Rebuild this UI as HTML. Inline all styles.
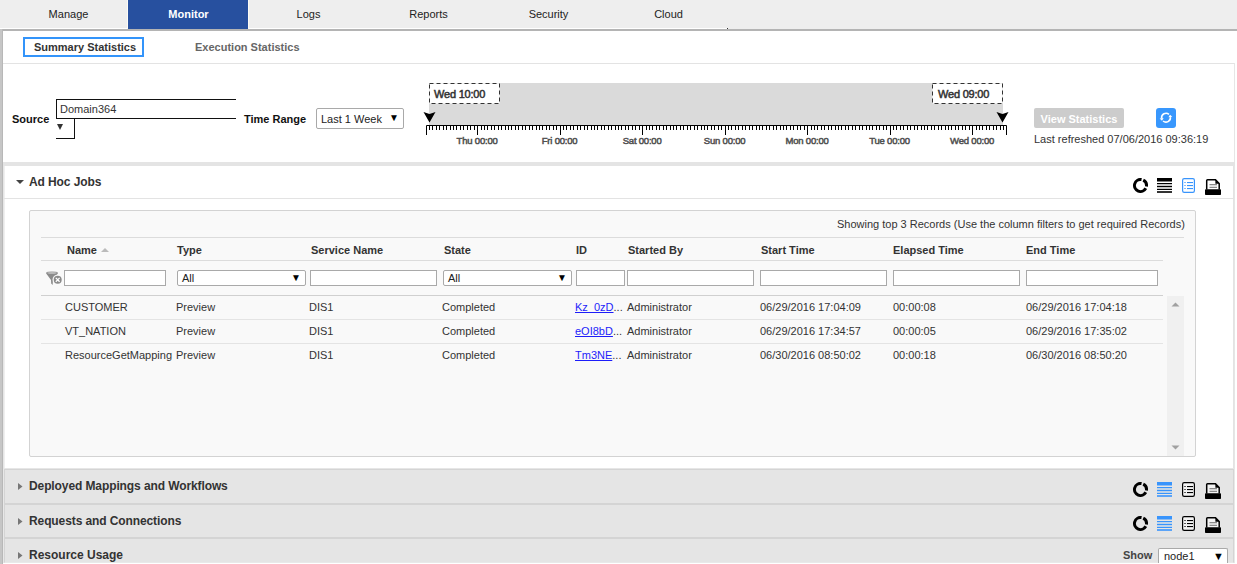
<!DOCTYPE html>
<html><head><meta charset="utf-8">
<style>
*{box-sizing:border-box}
html,body{margin:0;padding:0}
body{width:1237px;height:564px;overflow:hidden;position:relative;background:#fff;font-family:"Liberation Sans",sans-serif;font-size:11px;color:#333}
.a{position:absolute}
.nav{left:0;top:0;width:1237px;height:29px;background:#eeeeee}
.tab{position:absolute;top:0;height:28px;width:120px;text-align:center;line-height:28px;color:#222;font-size:11px;padding-left:1px}
.tab.on{background:#27509f;color:#fff;font-weight:bold}
.b{font-weight:bold}
.hdr{font-size:12px;font-weight:bold;color:#333;letter-spacing:-0.1px}
.inp{position:absolute;background:#fff;border:1px solid #a9a9a9;height:16px}
.sel{position:absolute;background:#fff;border:1px solid #a9a9a9;border-radius:2px;height:16px;font-size:11px;color:#222;line-height:14px;padding-left:4px}
.sel .ar{position:absolute;right:4px;top:0;font-size:10px;color:#000}
.th{position:absolute;top:244px;font-weight:bold;color:#333;font-size:11px}
.td{position:absolute;font-size:11px;color:#333}
.lnk{text-decoration:underline;color:#1d1dfa}
</style></head>
<body>
<svg width="0" height="0" style="position:absolute">
<defs>
<symbol id="donut" viewBox="0 0 15 15"><path d="M10.90 0.82A7.5 7.5 0 0 1 14.89 8.80L11.93 8.28A4.5 4.5 0 0 0 9.54 3.49ZM14.12 11.02A7.5 7.5 0 1 1 8.80 0.11L8.28 3.07A4.5 4.5 0 1 0 11.47 9.61Z" fill="#000"/></symbol>
<symbol id="lines" viewBox="0 0 15 15"><rect x="0" y="0" width="15" height="3.5"/><rect x="0" y="5" width="15" height="1"/><rect x="0" y="6" width="15" height="2" opacity=".22"/><rect x="0" y="8" width="15" height="1"/><rect x="0" y="9" width="15" height="2" opacity=".22"/><rect x="0" y="11" width="15" height="1"/><rect x="0" y="13" width="15" height="2" opacity=".8"/></symbol>
<symbol id="list" viewBox="0 0 13 15"><rect x="0.6" y="0.6" width="11.8" height="13.8" rx="1.6" style="fill:var(--ib,#f3f3f3)" stroke-width="1.2"/><g stroke="none"><rect x="2" y="4" width="2" height="1" opacity=".6"/><rect x="5" y="4" width="6" height="1.1"/><rect x="2" y="7" width="2" height="1" opacity=".6"/><rect x="5" y="7" width="6" height="1.1"/><rect x="2" y="10" width="2" height="1" opacity=".6"/><rect x="5" y="10" width="6" height="1.1"/></g></symbol>
<symbol id="prn" viewBox="0 0 16 16"><path d="M1.7 10.5V1.6Q1.7 0.8 2.5 0.8H10.5L14.2 4.5V10.5" style="fill:var(--ib,#f3f3f3)" stroke="#000" stroke-width="1.5"/><path d="M10.4 0.6L14.5 4.7H10.4Z" fill="#000"/><rect x="4.5" y="5" width="7.5" height="1.3" fill="#8a8a8a"/><rect x="4.5" y="7.8" width="7.5" height="1" fill="#707070"/><rect x="0" y="10.2" width="16" height="5.8" rx="0.8" fill="#000"/></symbol>
<symbol id="sync" viewBox="0 0 20 20"><path d="M5.64 10.31A4.4 4.4 0 0 1 12.94 6.43" fill="none" stroke="#fff" stroke-width="1.6"/><path d="M14.36 9.09A4.4 4.4 0 0 1 7.06 12.97" fill="none" stroke="#fff" stroke-width="1.6"/><path d="M5.98 12.69L3.66 10.59L7.62 10.03ZM14.02 6.71L16.34 8.81L12.38 9.37Z" fill="#fff"/></symbol>
</defs></svg>
<!-- top nav -->
<div class="a nav"></div>
<div class="a" style="left:0;top:28px;width:727px;height:1px;background:#fff"></div>
<div class="a" style="left:727px;top:28px;width:1px;height:1px;background:#333"></div>
<div class="tab" style="left:8px">Manage</div>
<div class="a" style="left:127px;top:0;width:1px;height:29px;background:#fcfbf5"></div><div class="a" style="left:248px;top:0;width:1px;height:29px;background:#fcfbf5"></div><div class="tab on" style="left:128px;height:29px;line-height:28px">Monitor</div>
<div class="tab" style="left:248px">Logs</div>
<div class="tab" style="left:368px">Reports</div>
<div class="tab" style="left:488px">Security</div>
<div class="tab" style="left:608px">Cloud</div>
<div class="a" style="left:0;top:29px;width:1237px;height:2px;background:#b4b4b4"></div>
<!-- left border -->
<div class="a" style="left:0;top:29px;width:2px;height:535px;background:#c6c6c6"></div><div class="a" style="left:2px;top:29px;width:1px;height:535px;background:#b8b8b8"></div>

<!-- top section -->
<div class="a" style="left:1234px;top:63px;width:1px;height:99px;background:#e6e6e6"></div>
<div class="a" style="left:3px;top:63px;width:1231px;height:1px;background:#e3e3e3"></div>
<div class="a" style="left:23px;top:37px;width:121px;height:20px;border:2px solid #3394fa"></div>
<div class="a b" style="left:34px;top:41px;line-height:12px;color:#333">Summary Statistics</div>
<div class="a b" style="left:195px;top:41px;line-height:12px;color:#666">Execution Statistics</div>

<div class="a b" style="left:12px;top:113px;line-height:12px;color:#111">Source</div>
<div class="a" style="left:56px;top:99px;width:180px;height:20px;border-top:1px solid #111;border-left:1px solid #111;border-bottom:1px solid #111"></div>
<div class="a" style="left:60px;top:103px;line-height:12px;color:#333">Domain364</div>
<div class="a" style="left:56px;top:118px;width:19px;height:21px;border-right:1px solid #111;border-bottom:1px solid #111"></div>
<div class="a" style="left:57px;top:124px;width:0;height:0;border-left:3.5px solid transparent;border-right:3.5px solid transparent;border-top:6px solid #333"></div>

<div class="a b" style="left:244px;top:113px;line-height:12px;color:#111">Time Range</div>
<div class="sel" style="left:316px;top:108px;width:88px;height:21px;line-height:20px;padding-left:4px">Last 1 Week<span class="ar" style="right:4px;font-size:10px;top:-1px">&#9660;</span></div>

<!-- timeline -->
<svg class="a" style="left:0;top:0" width="1237" height="160">
 <rect x="429" y="83" width="574" height="42" fill="#dadada"/>
 <rect x="429.5" y="83.5" width="70" height="20" fill="#fff" stroke="#333" stroke-dasharray="4,3"/>
 <rect x="932.5" y="83.5" width="70" height="20" fill="#fff" stroke="#333" stroke-dasharray="4,3"/>
 <g id="ticks" font-family="Liberation Sans" font-size="9.5" font-weight="normal" fill="#505050" stroke="#505050" stroke-width="0.5" letter-spacing="-0.2">
<path d="M426.5 135 V125.5 H1006.5 V135" fill="none" stroke="#000" stroke-width="1" letter-spacing="0"/>
<path d="M429.5 126V130M432.5 126V130M436.5 126V130M439.5 126V130M443.5 126V130M446.5 126V130M450.5 126V130M453.5 126V130M456.5 126V130M460.5 126V130M463.5 126V130M467.5 126V130M470.5 126V130M474.5 126V130M477.5 126V135M481.5 126V130M484.5 126V130M487.5 126V130M491.5 126V130M494.5 126V130M498.5 126V130M501.5 126V130M505.5 126V130M508.5 126V130M511.5 126V130M515.5 126V130M518.5 126V130M522.5 126V130M525.5 126V130M529.5 126V130M532.5 126V130M536.5 126V130M539.5 126V130M542.5 126V130M546.5 126V130M549.5 126V130M553.5 126V130M556.5 126V130M560.5 126V135M563.5 126V130M566.5 126V130M570.5 126V130M573.5 126V130M577.5 126V130M580.5 126V130M584.5 126V130M587.5 126V130M591.5 126V130M594.5 126V130M597.5 126V130M601.5 126V130M604.5 126V130M608.5 126V130M611.5 126V130M615.5 126V130M618.5 126V130M621.5 126V130M625.5 126V130M628.5 126V130M632.5 126V130M635.5 126V130M639.5 126V130M642.5 126V135M646.5 126V130M649.5 126V130M652.5 126V130M656.5 126V130M659.5 126V130M663.5 126V130M666.5 126V130M670.5 126V130M673.5 126V130M676.5 126V130M680.5 126V130M683.5 126V130M687.5 126V130M690.5 126V130M694.5 126V130M697.5 126V130M701.5 126V130M704.5 126V130M707.5 126V130M711.5 126V130M714.5 126V130M718.5 126V130M721.5 126V130M725.5 126V135M728.5 126V130M731.5 126V130M735.5 126V130M738.5 126V130M742.5 126V130M745.5 126V130M749.5 126V130M752.5 126V130M756.5 126V130M759.5 126V130M762.5 126V130M766.5 126V130M769.5 126V130M773.5 126V130M776.5 126V130M780.5 126V130M783.5 126V130M786.5 126V130M790.5 126V130M793.5 126V130M797.5 126V130M800.5 126V130M804.5 126V130M807.5 126V135M811.5 126V130M814.5 126V130M817.5 126V130M821.5 126V130M824.5 126V130M828.5 126V130M831.5 126V130M835.5 126V130M838.5 126V130M841.5 126V130M845.5 126V130M848.5 126V130M852.5 126V130M855.5 126V130M859.5 126V130M862.5 126V130M866.5 126V130M869.5 126V130M872.5 126V130M876.5 126V130M879.5 126V130M883.5 126V130M886.5 126V130M890.5 126V135M893.5 126V130M896.5 126V130M900.5 126V130M903.5 126V130M907.5 126V130M910.5 126V130M914.5 126V130M917.5 126V130M921.5 126V130M924.5 126V130M927.5 126V130M931.5 126V130M934.5 126V130M938.5 126V130M941.5 126V130M945.5 126V130M948.5 126V130M951.5 126V130M955.5 126V130M958.5 126V130M962.5 126V130M965.5 126V130M969.5 126V130M972.5 126V135M976.5 126V130M979.5 126V130M982.5 126V130M986.5 126V130M989.5 126V130M993.5 126V130M996.5 126V130M1000.5 126V130M1003.5 126V130" fill="none" stroke="#000" stroke-width="1"/>
<text x="477.1" y="144" text-anchor="middle">Thu 00:00</text>
<text x="559.6" y="144" text-anchor="middle">Fri 00:00</text>
<text x="642.1" y="144" text-anchor="middle">Sat 00:00</text>
<text x="724.6" y="144" text-anchor="middle">Sun 00:00</text>
<text x="807.1" y="144" text-anchor="middle">Mon 00:00</text>
<text x="889.6" y="144" text-anchor="middle">Tue 00:00</text>
<text x="972.1" y="144" text-anchor="middle">Wed 00:00</text>
 </g>
 <path d="M423.5 112 L429.5 122.5 L435.5 112 L429.5 114 Z" fill="#000"/>
 <path d="M996.5 112 L1002.5 122.5 L1008.5 112 L1002.5 114 Z" fill="#000"/>
</svg>
<div class="a" style="left:434px;top:88px;line-height:12px;color:#333;letter-spacing:-0.2px;-webkit-text-stroke:0.5px #333">Wed 10:00</div>
<div class="a" style="left:938px;top:88px;line-height:12px;color:#333;letter-spacing:-0.2px;-webkit-text-stroke:0.5px #333">Wed 09:00</div>

<div class="a b" style="left:1034px;top:108px;width:90px;height:20px;background:#cccccc;border-radius:2px;color:#fff;text-align:center;line-height:22px">View Statistics</div>
<div class="a" style="left:1156px;top:108px;width:20px;height:20px;background:#3897fd;border-radius:3px"></div>
<div class="a" style="left:1034px;top:133px;line-height:12px;color:#333">Last refreshed 07/06/2016 09:36:19</div>

<!-- gray bar -->
<div class="a" style="left:3px;top:162px;width:1232px;height:4px;background:#e4e4e4"></div>

<!-- ad hoc panel -->
<div class="a" style="left:3px;top:166px;width:1232px;height:303px;border:1px solid #e6e6e6;border-top:0"></div>
<div class="a" style="left:4px;top:166px;width:1230px;height:302px;border-left:1px solid #efefef;border-right:1px solid #e3e3e3"></div>
<div class="a" style="left:4px;top:198px;width:1230px;height:1px;background:#e3e3e3"></div>
<div class="a" style="left:15.5px;top:180px;width:0;height:0;border-left:4px solid transparent;border-right:4px solid transparent;border-top:4.5px solid #444"></div>
<div class="a hdr" style="left:29px;top:175px;line-height:14px">Ad Hoc Jobs</div>

<!-- grid box -->
<div class="a" style="left:29px;top:210px;width:1167px;height:247px;background:#f9f9f9;border:1px solid #d3d3d3;border-radius:2px"></div>
<div class="a" style="left:837px;top:218px;line-height:12px;color:#333">Showing top 3 Records (Use the column filters to get required Records)</div>
<div class="a" style="left:41px;top:237px;width:1143px;height:1px;background:#dcdcdc"></div>
<div class="a" style="left:41px;top:260px;width:1122px;height:1px;background:#dcdcdc"></div>
<div class="a" style="left:41px;top:295px;width:1122px;height:1px;background:#d0d0d0"></div>
<div class="a" style="left:41px;top:319px;width:1122px;height:1px;background:#e4e4e4"></div>
<div class="a" style="left:41px;top:343px;width:1122px;height:1px;background:#e4e4e4"></div>

<div class="th" style="left:67px">Name</div>
<div class="a" style="left:101px;top:248px;width:0;height:0;border-left:4px solid transparent;border-right:4px solid transparent;border-bottom:4px solid #bbb"></div>
<div class="th" style="left:177px">Type</div>
<div class="th" style="left:311px">Service Name</div>
<div class="th" style="left:444px">State</div>
<div class="th" style="left:576px">ID</div>
<div class="th" style="left:628px">Started By</div>
<div class="th" style="left:761px">Start Time</div>
<div class="th" style="left:893px">Elapsed Time</div>
<div class="th" style="left:1026px">End Time</div>

<div class="inp" style="left:64px;top:270px;width:102px"></div>
<div class="sel" style="left:177px;top:270px;width:129px">All<span class="ar">&#9660;</span></div>
<div class="inp" style="left:310px;top:270px;width:127px"></div>
<div class="sel" style="left:443px;top:270px;width:129px">All<span class="ar">&#9660;</span></div>
<div class="inp" style="left:576px;top:270px;width:49px"></div>
<div class="inp" style="left:627px;top:270px;width:127px"></div>
<div class="inp" style="left:760px;top:270px;width:127px"></div>
<div class="inp" style="left:893px;top:270px;width:127px"></div>
<div class="inp" style="left:1026px;top:270px;width:132px"></div>

<!-- rows -->
<div class="td" style="left:65px;top:301px">CUSTOMER</div>
<div class="td" style="left:176px;top:301px">Preview</div>
<div class="td" style="left:309px;top:301px">DIS1</div>
<div class="td" style="left:442px;top:301px">Completed</div>
<div class="td" style="left:575px;top:301px"><span class="lnk">Kz_0zD</span>...</div>
<div class="td" style="left:627px;top:301px">Administrator</div>
<div class="td" style="left:760px;top:301px">06/29/2016 17:04:09</div>
<div class="td" style="left:893px;top:301px">00:00:08</div>
<div class="td" style="left:1026px;top:301px">06/29/2016 17:04:18</div>

<div class="td" style="left:65px;top:325px">VT_NATION</div>
<div class="td" style="left:176px;top:325px">Preview</div>
<div class="td" style="left:309px;top:325px">DIS1</div>
<div class="td" style="left:442px;top:325px">Completed</div>
<div class="td" style="left:575px;top:325px"><span class="lnk">eOI8bD</span>...</div>
<div class="td" style="left:627px;top:325px">Administrator</div>
<div class="td" style="left:760px;top:325px">06/29/2016 17:34:57</div>
<div class="td" style="left:893px;top:325px">00:00:05</div>
<div class="td" style="left:1026px;top:325px">06/29/2016 17:35:02</div>

<div class="td" style="left:65px;top:349px">ResourceGetMapping</div>
<div class="td" style="left:176px;top:349px">Preview</div>
<div class="td" style="left:309px;top:349px">DIS1</div>
<div class="td" style="left:442px;top:349px">Completed</div>
<div class="td" style="left:575px;top:349px"><span class="lnk">Tm3NE</span>...</div>
<div class="td" style="left:627px;top:349px">Administrator</div>
<div class="td" style="left:760px;top:349px">06/30/2016 08:50:02</div>
<div class="td" style="left:893px;top:349px">00:00:18</div>
<div class="td" style="left:1026px;top:349px">06/30/2016 08:50:20</div>

<!-- scrollbar -->
<div class="a" style="left:1167px;top:296px;width:17px;height:160px;background:#f0f0f0"></div>

<!-- collapsed panels -->
<div class="a" style="left:3px;top:469px;width:1232px;height:94px;border-left:1px solid #e8e8e8;border-right:1px solid #e8e8e8"></div>
<div class="a" style="left:4px;top:469px;width:1230px;height:35px;background:#e5e5e5;border:1px solid #d4d4d4"></div>
<div class="a" style="left:4px;top:504px;width:1230px;height:34px;background:#e5e5e5;border:1px solid #d4d4d4"></div>
<div class="a" style="left:4px;top:538px;width:1230px;height:25px;background:#e5e5e5;border:1px solid #d4d4d4;border-bottom:1px solid #e9e9e9"></div>
<div class="a hdr" style="left:29px;top:479px;line-height:14px">Deployed Mappings and Workflows</div>
<div class="a hdr" style="left:29px;top:514px;line-height:14px">Requests and Connections</div>
<div class="a hdr" style="left:29px;top:548px;line-height:14px;letter-spacing:0">Resource Usage</div>
<div class="a b" style="left:1123px;top:549px;line-height:12px;color:#444">Show</div>
<div class="sel" style="left:1158px;top:548px;width:70px;height:15px;border-bottom:0;border-radius:2px 2px 0 0;line-height:14px;padding-left:5px;overflow:hidden">node1<span class="ar" style="right:3px;font-size:11px">&#9660;</span></div>
<div class="a" style="left:3px;top:563px;width:1234px;height:1px;background:#fff"></div>
<svg class="a" style="left:1133px;top:178px" width="15" height="15"><use href="#donut"/></svg><svg class="a" style="left:1157px;top:178px" width="15" height="15" fill="#000"><use href="#lines"/></svg><svg class="a" style="left:1182px;top:178px;--ib:#fff" width="13" height="15" fill="#3894fc" stroke="#3894fc"><use href="#list"/></svg><svg class="a" style="left:1205px;top:179px;--ib:#fff" width="16" height="16"><use href="#prn"/></svg>
<svg class="a" style="left:1133px;top:482px" width="15" height="15"><use href="#donut"/></svg><svg class="a" style="left:1157px;top:482px" width="15" height="15" fill="#3894fc"><use href="#lines"/></svg><svg class="a" style="left:1182px;top:482px" width="13" height="15" fill="#000" stroke="#000"><use href="#list"/></svg><svg class="a" style="left:1205px;top:483px" width="16" height="16"><use href="#prn"/></svg>
<svg class="a" style="left:1133px;top:516px" width="15" height="15"><use href="#donut"/></svg><svg class="a" style="left:1157px;top:516px" width="15" height="15" fill="#3894fc"><use href="#lines"/></svg><svg class="a" style="left:1182px;top:516px" width="13" height="15" fill="#000" stroke="#000"><use href="#list"/></svg><svg class="a" style="left:1205px;top:517px" width="16" height="16"><use href="#prn"/></svg>
<svg class="a" style="left:1156px;top:108px" width="20" height="20"><use href="#sync"/></svg>
<svg class="a" style="left:44px;top:270px" width="20" height="17">
 <ellipse cx="8" cy="3" rx="6" ry="1.6" fill="#999"/>
 <path d="M2 3.2 L14 3.2 L9 10 L8.6 15 L7.2 13.5 L7 10 Z" fill="#8a8a8a"/>
 <ellipse cx="8" cy="3" rx="4.5" ry="0.8" fill="#c8c8c8"/>
 <circle cx="13.7" cy="9.8" r="5.2" fill="#f9f9f9"/>
 <circle cx="13.7" cy="9.8" r="4" fill="#8a8a8a"/>
 <path d="M11.8 7.9L15.6 11.7M15.6 7.9L11.8 11.7" stroke="#fff" stroke-width="1.3"/>
</svg>
<svg class="a" style="left:0;top:460px" width="30" height="104">
 <path d="M18 23 L22.5 26.5 L18 30 Z" fill="#777"/>
 <path d="M18 58 L22.5 61.5 L18 65 Z" fill="#777"/>
 <path d="M18 92 L22.5 95.5 L18 99 Z" fill="#777"/>
</svg>
<svg class="a" style="left:1167px;top:296px" width="17" height="160">
 <path d="M4.5 10.5 L8.5 6.5 L12.5 10.5 Z" fill="#a0a0a0"/>
 <path d="M4.5 149.5 L8.5 153.5 L12.5 149.5 Z" fill="#a0a0a0"/>
</svg>
</body></html>
